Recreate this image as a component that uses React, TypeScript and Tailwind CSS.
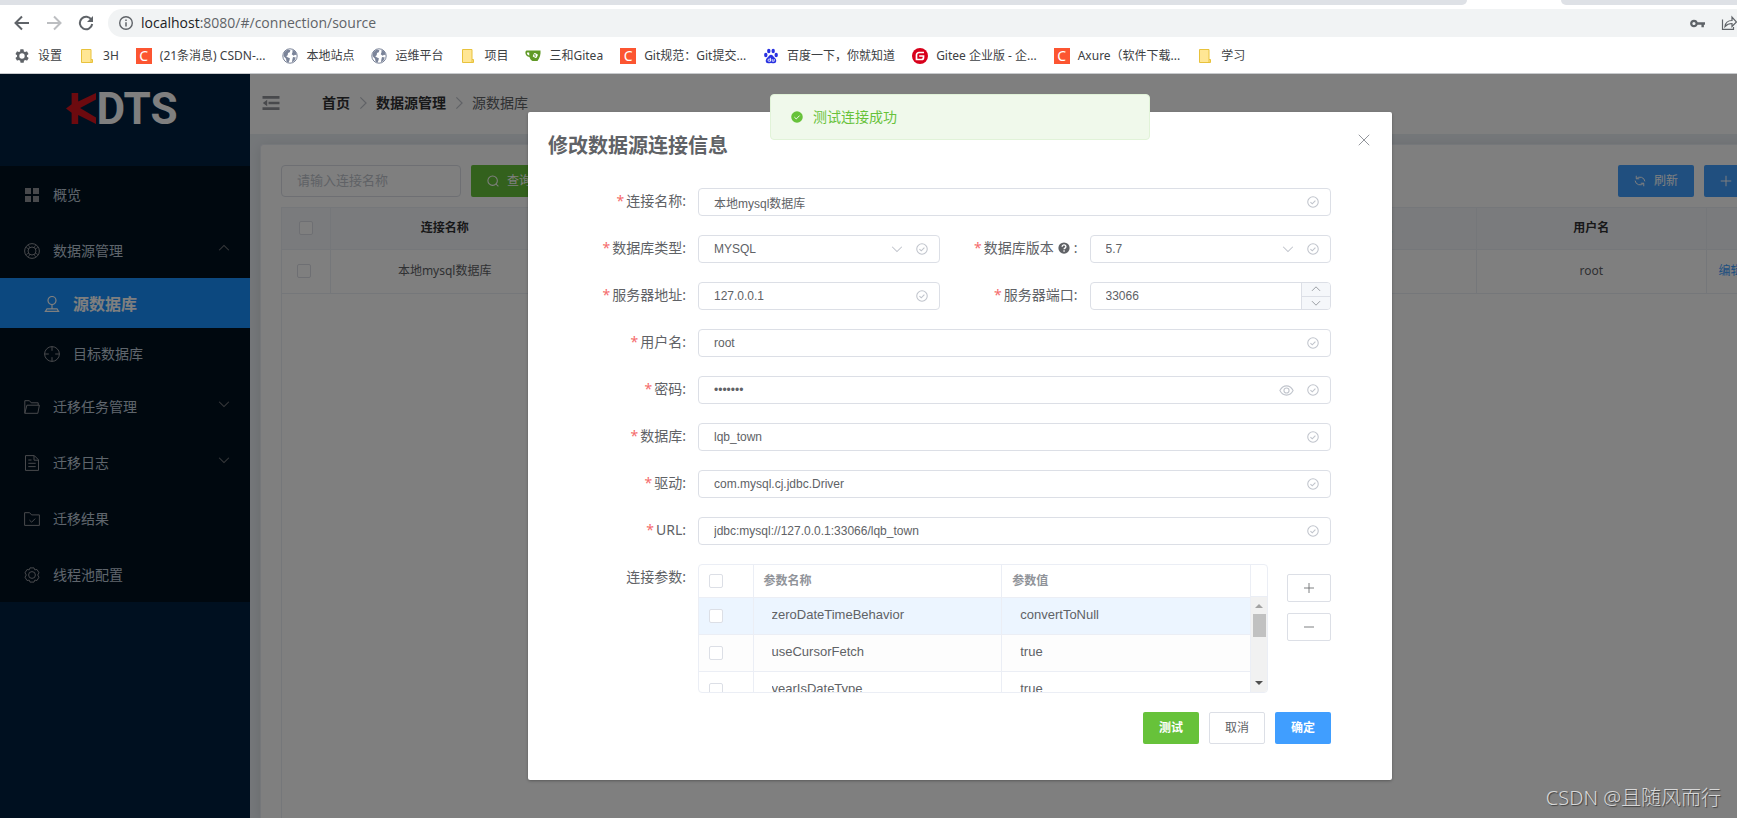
import { useState } from 'react';
import type { ReactNode } from 'react';
import clsx from 'clsx';

const UI_FONT = "font-['Noto_Sans','Noto_Sans_CJK_SC',sans-serif]";
const INPUT_FONT = "font-['Liberation_Sans','Noto_Sans_CJK_SC',sans-serif]";

interface IconProps {
  className?: string;
  children?: ReactNode;
}

// Thin 16px line icon, shared by the whole console
const LineIcon = ({ className = 'h-4 w-4', children }: IconProps) => (
  <svg viewBox="0 0 16 16" className={clsx('shrink-0', className)} fill="none" stroke="currentColor" aria-hidden="true">
    {children}
  </svg>
);

const GridIcon = () => (
  <LineIcon>
    <path d="M1 1h6v6H1zM9 1h6v6H9zM1 9h6v6H1zM9 9h6v6H9z" fill="currentColor" stroke="none" />
  </LineIcon>
);

const HelpIcon = () => (
  <LineIcon>
    <circle cx="8" cy="8" r="7.4" />
    <circle cx="8" cy="8" r="4" />
    <path d="M4.4 2.2 6 4.6M11.6 2.2 10 4.6M4.4 13.8 6 11.4M11.6 13.8 10 11.4M2.2 4.4l2.4 1.6M2.2 11.6l2.4-1.6M13.8 4.4l-2.4 1.6M13.8 11.6l-2.4-1.6" strokeWidth="0.8" />
  </LineIcon>
);

const CoordinateIcon = () => (
  <LineIcon>
    <circle cx="8" cy="4.5" r="4" strokeWidth="1.2" />
    <path d="M8 8.5V13M3 12.8h10l1.6 2.6H1.4z" strokeWidth="1.2" />
  </LineIcon>
);

const AimIcon = () => (
  <LineIcon>
    <circle cx="8" cy="8" r="7.4" />
    <path d="M8 .6v4.2M8 11.2v4.2M.6 8h4.2M11.2 8h4.2" />
  </LineIcon>
);

const FolderOpenIcon = () => (
  <LineIcon>
    <path d="M.8 14.3V1.7h4.6l1.8 2.1h7v2.4M.8 14.3 2.9 6.2h12.5l-1.6 8.1z" />
  </LineIcon>
);

const DocumentIcon = () => (
  <LineIcon>
    <path d="M1.5.6h8.800l4.200 4.200v10.600h-13zM10 .8v4.400h4.300M4.300 5h3.200M4.300 8.300h7.400M4.300 11.600h7.400" />
  </LineIcon>
);

const FolderCheckedIcon = () => (
  <LineIcon>
    <path d="M.6 14.400V1.700h5l2 2.200h7.800v10.500zM5.400 9l2.200 2.200 3.600-3.600" />
  </LineIcon>
);

const SettingIcon = () => (
  <LineIcon>
    <circle cx="8" cy="8" r="3.4" />
    <path d="M6 .9h4l.8 2 2.200-.4 2 3.300L13.700 8l1.300 2.200-2 3.300-2.200-.4-.8 2H6l-.8-2-2.200.4-2-3.300L2.300 8 1 5.800l2-3.300 2.200.4z" strokeLinejoin="round" />
  </LineIcon>
);

const Chevron = ({ up, className = 'h-3 w-3' }: { up?: boolean; className?: string }) => (
  <LineIcon className={className}>
    <path d={up ? 'M1.5 11 8 4.5l6.5 6.5' : 'M1.5 5 8 11.5 14.5 5'} strokeWidth="1.4" />
  </LineIcon>
);

const CircleCheck = () => (
  <LineIcon className="h-3 w-3 text-[#c0c4cc]">
    <circle cx="8" cy="8" r="7" strokeWidth="1.4" />
    <path d="M4.6 8.2 7 10.4l4.2-4.2" strokeWidth="1.5" />
  </LineIcon>
);

const EyeIcon = () => (
  <svg viewBox="0 0 16 12" className="h-[11px] w-[15px]" fill="none" stroke="currentColor" aria-hidden="true">
    <path d="M.8 6C2.6 2.6 5 1 8 1s5.400 1.600 7.200 5C13.400 9.400 11 11 8 11S2.600 9.400.8 6z" strokeWidth="1.200" />
    <circle cx="8" cy="6" r="2.800" strokeWidth="1.200" />
  </svg>
);

/* ---------- browser chrome ---------- */

const CsdnFavicon = () => (
  <span className="flex h-4 w-4 items-center justify-center bg-[#fc5531] text-sm leading-4 text-white">C</span>
);

const FolderFavicon = () => (
  <svg viewBox="0 0 16 16" className="h-4 w-4" aria-hidden="true">
    <path d="M2.500 1.500h9.500v10h1.500v3h-11z" fill="#ffe694" stroke="#e8c23c" />
    <path d="M12 11.500v3" stroke="#e8c23c" />
  </svg>
);

const GlobeFavicon = () => (
  <svg viewBox="0 0 16 16" className="h-4 w-4" aria-hidden="true">
    <circle cx="8" cy="8" r="7.200" fill="#fff" stroke="#7b8499" />
    <path d="M2 4.500 5.500 1.600l3 .6-.8 2-1.700.8-.3 2.200-1.500 1 1.800 1.300 1.900.8-.5 2.200-1 2.200-1.800-.9-.6-3L1.500 8z" fill="#7b8499" />
    <path d="M10.500 1.500 13.800 4l.9 3.300-1.700-.6-1.300 1.100-2-1.600.8-1.900zM11 9l2.800.4-1.200 3L10 14.400l.3-2.600z" fill="#7b8499" />
  </svg>
);

const GearFavicon = () => (
  <svg viewBox="0 0 24 24" className="h-4 w-4" fill="#5f6368" aria-hidden="true">
    <path d="M19.400 13a7.500 7.500 0 0 0 0-2l2.100-1.600c.2-.2.300-.4.100-.7l-2-3.400c-.1-.2-.4-.3-.6-.2l-2.500 1a7.300 7.300 0 0 0-1.700-1l-.4-2.600a.5.5 0 0 0-.5-.5h-4a.5.5 0 0 0-.5.4L9.200 5.100a7.300 7.300 0 0 0-1.700 1L5 5.100c-.2-.1-.5 0-.6.2l-2 3.400c-.1.300 0 .5.100.7L4.600 11a7.500 7.500 0 0 0 0 2l-2.100 1.600c-.2.200-.3.400-.1.700l2 3.400c.1.200.4.300.6.200l2.500-1c.5.400 1.100.8 1.700 1l.4 2.600c0 .3.200.5.500.5h4c.3 0 .5-.2.500-.4l.4-2.700c.6-.2 1.200-.6 1.700-1l2.500 1c.2.100.5 0 .6-.2l2-3.400c.1-.3 0-.5-.1-.7zM12 16a4 4 0 1 1 0-8 4 4 0 0 1 0 8z" />
  </svg>
);

const GiteaFavicon = () => (
  <svg viewBox="0 0 16 16" className="h-4 w-4" aria-hidden="true">
    <path d="M4.500 2.500h11c.4 3.500-.6 7.500-3 10.500h-5C5.700 12 4.800 10.500 4.500 9 2 9 .3 6.500.4 4.300c.1-1.200.8-1.800 1.800-1.800z" fill="#609926" />
    <path d="M4.200 4.500H2.400c-.9 0-.7 2.500 1.900 2.900z" fill="#fff" />
    <rect x="8" y="5.300" width="4.200" height="4.200" rx=".8" fill="#fff" transform="rotate(25 10 8)" />
    <path d="m9.800 6 .4 2.800" stroke="#609926" />
  </svg>
);

const BaiduFavicon = () => (
  <svg viewBox="0 0 16 16" className="h-4 w-4" fill="#2932e1" aria-hidden="true">
    <ellipse cx="2.800" cy="7" rx="1.700" ry="2.200" />
    <ellipse cx="5.800" cy="3" rx="1.700" ry="2.300" />
    <ellipse cx="10.200" cy="3" rx="1.700" ry="2.300" />
    <ellipse cx="13.200" cy="7" rx="1.700" ry="2.200" />
    <path d="M8 6.800c1.600 0 2.300 1.800 3.700 3 2.400 2 1.900 5.400-.7 5.500-1 0-2-.3-3-.3s-2 .3-3 .3c-2.600-.1-3.100-3.500-.7-5.500 1.400-1.200 2.100-3 3.700-3z" />
    <circle cx="6.200" cy="12.200" r="1.200" fill="none" stroke="#fff" strokeWidth=".8" />
    <path d="M7.500 9.800v3.700M9.200 11v2.200h2V11" fill="none" stroke="#fff" strokeWidth=".8" />
  </svg>
);

const GiteeFavicon = () => (
  <svg viewBox="0 0 16 16" className="h-4 w-4" aria-hidden="true">
    <circle cx="8" cy="8" r="8" fill="#d8001b" />
    <path d="M12 4.500H7A2.500 2.500 0 0 0 4.500 7v4.500h5A2 2 0 0 0 11.500 9.500V8H7.200" fill="none" stroke="#fff" strokeWidth="1.700" />
  </svg>
);

const bookmarks = [
  { label: '设置', icon: <GearFavicon /> },
  { label: '3H', icon: <FolderFavicon /> },
  { label: '(21条消息) CSDN-...', icon: <CsdnFavicon /> },
  { label: '本地站点', icon: <GlobeFavicon /> },
  { label: '运维平台', icon: <GlobeFavicon /> },
  { label: '项目', icon: <FolderFavicon /> },
  { label: '三和Gitea', icon: <GiteaFavicon /> },
  { label: 'Git规范：Git提交...', icon: <CsdnFavicon /> },
  { label: '百度一下，你就知道', icon: <BaiduFavicon /> },
  { label: 'Gitee 企业版 - 企...', icon: <GiteeFavicon /> },
  { label: 'Axure（软件下载...', icon: <CsdnFavicon /> },
  { label: '学习', icon: <FolderFavicon /> },
];

function BrowserBar() {
  return (
    <div className="shrink-0 border-b border-[#c8cacd] bg-white">
      <div className="flex h-[5px]">
        <div className="w-[1467px] rounded-br-lg bg-[#dee1e6]" />
        <div className="w-[94px]" />
        <div className="flex-1 rounded-bl-lg bg-[#dee1e6]" />
      </div>
      <div className="flex items-center pt-1 pl-3.5 pr-4">
        <div className="flex w-[94px] gap-4 text-[#5f6368]">
          <button aria-label="Back">
            <LineIcon>
              <path d="M15 8H2M8 1.500 1.500 8 8 14.500" strokeWidth="2" />
            </LineIcon>
          </button>
          <button aria-label="Forward" className="text-[#bcbec1]">
            <LineIcon>
              <path d="M1 8h13M8 1.500 14.500 8 8 14.500" strokeWidth="2" />
            </LineIcon>
          </button>
          <button aria-label="Reload">
            <LineIcon>
              <path d="M13.500 5A6.200 6.200 0 1 0 14.200 9" strokeWidth="2" />
              <path d="M15 1v6H9z" fill="currentColor" stroke="none" />
            </LineIcon>
          </button>
        </div>
        <div className="flex h-7 flex-1 items-center gap-2 rounded-full bg-[#f1f3f4] pl-[11px] text-[#5f6368]">
          <LineIcon className="h-[14px] w-[14px]">
            <circle cx="8" cy="8" r="7.200" strokeWidth="1.600" />
            <path d="M8 7v5M8 4v1.700" strokeWidth="1.700" />
          </LineIcon>
          <span className="flex-1 font-['Open_Sans'] text-sm leading-5">
            <span className="text-[#202124]">localhost</span>:8080/#/connection/source
          </span>
          <div className="flex w-[214px] items-center gap-4">
            <svg viewBox="0 0 16 16" className="h-[15px] w-[15px]" fill="none" stroke="currentColor" aria-hidden="true">
              <circle cx="4.200" cy="8" r="2.900" strokeWidth="2.400" />
              <path d="M7.500 8H16M13.500 8v4" strokeWidth="2.600" />
            </svg>
            <LineIcon>
              <path d="M1.500 4.500v9.800h11V12M4 11.500c.5-4 3-6 7-6v-3.500l4.500 5-4.500 4.500V8.500c-3 0-5 .8-7 3z" strokeWidth="1.200" />
            </LineIcon>
          </div>
        </div>
      </div>
      <nav className="flex h-9 items-center gap-[17px] pt-0.5 pl-3.5 text-xs whitespace-nowrap text-[#3c4043]">
        {bookmarks.map((mark) => (
          <a key={mark.label} href="#" className="flex items-center gap-2">
            {mark.icon}
            {mark.label}
          </a>
        ))}
      </nav>
    </div>
  );
}

/* ---------- console page ---------- */

interface MenuEntry {
  label: string;
  icon: ReactNode;
  arrow?: 'up' | 'down';
  child?: boolean;
  active?: boolean;
}

const menu: MenuEntry[] = [
  { label: '概览', icon: <GridIcon /> },
  { label: '数据源管理', icon: <HelpIcon />, arrow: 'up' },
  { label: '源数据库', icon: <CoordinateIcon />, child: true, active: true },
  { label: '目标数据库', icon: <AimIcon />, child: true },
  { label: '迁移任务管理', icon: <FolderOpenIcon />, arrow: 'down' },
  { label: '迁移日志', icon: <DocumentIcon />, arrow: 'down' },
  { label: '迁移结果', icon: <FolderCheckedIcon /> },
  { label: '线程池配置', icon: <SettingIcon /> },
];

function Sidebar() {
  return (
    <aside className="w-[250px] shrink-0 bg-[#002140]">
      <div className="flex h-[92px] items-start justify-center pt-3 pr-1.5">
        <svg viewBox="0 0 32 34" className="mt-1.5 h-8 w-[30px]" fill="#d9141e" preserveAspectRatio="none" aria-label="K">
          <path d="M6 1h7v9L32 1v7L15 17l17 10v7L13 24.500V34H6V22L0 17.500 6 13z" />
        </svg>
        <span className="font-[Roboto] text-[44px] leading-[46px] font-bold text-white">DTS</span>
      </div>
      <nav className="bg-[#00101f]">
        {menu.map((item) => (
          <a
            key={item.label}
            href="#"
            className={clsx(
              'flex items-center gap-[13px] pt-0.5 pr-5 text-sm',
              item.child ? 'h-[50px] pl-11' : 'h-14 pl-6',
              item.active ? 'bg-[#1890ff] text-white' : 'text-[#bfcbd9]'
            )}
          >
            <span className={item.active ? 'text-white' : 'text-[#909399]'}>{item.icon}</span>
            <span className={clsx('flex-1', item.active && 'text-base font-bold')}>{item.label}</span>
            {item.arrow && (
              <span className="pb-1.5 text-[#73767a]">
                <Chevron up={item.arrow === 'up'} />
              </span>
            )}
          </a>
        ))}
      </nav>
    </aside>
  );
}

const Checkbox = ({ label }: { label: string }) => (
  <input
    type="checkbox"
    aria-label={label}
    className="block h-3.5 w-3.5 appearance-none rounded-xs border border-[#dcdfe6] bg-white checked:bg-[#409eff]"
  />
);

const sourceColumns = ['连接名称', '数据库类型', '数据库版本', '服务器端口', '服务器地址', '用户名'];
const sourceRow = ['本地mysql数据库', 'MYSQL', '5.7', '33066', '127.0.0.1', 'root'];

function SourceTable() {
  return (
    <div className="flex-1 border border-b-0 border-[#ebeef5]">
      <table className="w-full table-fixed border-collapse text-center text-xs">
        <thead>
          <tr className="h-[41px] bg-[#f5f7fa] text-[#303133]">
            <th className="w-12 border-r border-b border-[#ebeef5] pl-[17px]">
              <Checkbox label="全选" />
            </th>
            {sourceColumns.map((name) => (
              <th key={name} className="border-r border-b border-[#ebeef5] font-bold">{name}</th>
            ))}
            <th className="w-[183px] border-b border-[#ebeef5] font-bold">操作</th>
          </tr>
        </thead>
        <tbody>
          <tr className="h-11 text-[#606266]">
            <td className="border-r border-b border-[#ebeef5] pl-[15px]">
              <Checkbox label="选择 本地mysql数据库" />
            </td>
            {sourceRow.map((value) => (
              <td key={value} className="border-r border-b border-[#ebeef5]">{value}</td>
            ))}
            <td className="border-b border-[#ebeef5] pl-3 text-left">
              <a href="#" className="text-[#409eff]">编辑</a>
            </td>
          </tr>
        </tbody>
      </table>
    </div>
  );
}

function SourcePage() {
  return (
    <main className="flex flex-1 flex-col bg-[#e9eef3]">
      <header className="flex h-[60px] shrink-0 items-center bg-white pl-3 pb-0.5">
        <button aria-label="折叠菜单" className="text-[#909399]">
          <svg viewBox="0 0 18 16" className="h-4 w-[18px]" fill="currentColor" aria-hidden="true">
            <path d="M.5 1h17v2.800H.5zM6.500 6.800h11v2.400h-11zM.5 12.200h17V15H.5zM.8 8l4.400-3.200v6.400z" />
          </svg>
        </button>
        <nav className="flex items-center gap-1.5 pl-[42px] text-sm text-[#606266]">
          <a href="#" className="font-bold text-[#303133]">首页</a>
          <span className="text-[#c0c4cc] -rotate-90"><Chevron className="h-3.5 w-3.5" /></span>
          <a href="#" className="font-bold text-[#303133]">数据源管理</a>
          <span className="text-[#c0c4cc] -rotate-90"><Chevron className="h-3.5 w-3.5" /></span>
          <span>源数据库</span>
        </nav>
      </header>
      <section className="m-2.5 mb-0 flex flex-1 flex-col gap-2.5 rounded-t border border-b-0 border-[#ebeef5] bg-white pt-5 pr-[19px] pl-5 shadow-[0_2px_12px_0_rgba(0,0,0,0.1)]">
        <div className="flex gap-2.5 text-xs">
          <input
            aria-label="连接名称"
            placeholder="请输入连接名称"
            className="h-8 w-[180px] rounded border border-[#dcdfe6] px-[15px] pb-0.5 text-[13px] placeholder:text-[#c0c4cc]"
          />
          <button className="flex h-8 items-center gap-2 rounded-xs bg-[#67c23a] px-4 text-white">
            <LineIcon className="h-3 w-3">
              <circle cx="7.500" cy="7.500" r="6.300" strokeWidth="1.400" />
              <path d="m12 12 3.200 3.200" strokeWidth="1.400" />
            </LineIcon>
            查询
          </button>
          <div className="ml-auto flex gap-2.5 text-white">
            <button className="flex h-8 w-[76px] items-center justify-center gap-2 rounded-xs bg-[#409eff]">
              <LineIcon className="h-3 w-3">
                <path d="M3 1v4h4M13 15v-4H9M3.200 5A6.500 6.500 0 0 1 14.500 8.500M12.800 11A6.500 6.500 0 0 1 1.500 7.500" strokeWidth="1.300" />
              </LineIcon>
              刷新
            </button>
            <button className="flex h-8 w-[76px] items-center justify-center gap-2 rounded-xs bg-[#409eff]">
              <LineIcon className="h-3 w-3"><path d="M8 1v14M1 8h14" strokeWidth="1.300" /></LineIcon>
              新增
            </button>
            <button className="h-8 w-[100px] rounded-xs bg-[#f56c6c]">批量删除</button>
          </div>
        </div>
        <SourceTable />
      </section>
    </main>
  );
}

/* ---------- edit dialog ---------- */

interface FieldProps {
  id?: string;
  label: ReactNode;
  required?: boolean;
  wide?: boolean;
  children: ReactNode;
}

const Field = ({ id, label, required = true, wide, children }: FieldProps) => (
  <div className={clsx('flex', wide && 'col-span-2')}>
    <label htmlFor={id} className="flex h-[26px] w-[150px] shrink-0 items-center justify-end gap-0.5 pr-3 text-sm text-[#606266]">
      {required && <span className="text-[#f56c6c]">*</span>}
      {label}
    </label>
    {children}
  </div>
);

const Box = ({ children }: { children: ReactNode }) => (
  <div className="flex h-7 min-w-0 flex-1 items-center gap-[13px] overflow-hidden rounded border border-[#dcdfe6] bg-white pr-[11px] text-[#c0c4cc]">
    {children}
  </div>
);

const textInput = clsx('h-full min-w-0 flex-1 appearance-none bg-transparent pl-[15px] text-xs text-[#606266] outline-none', INPUT_FONT);

const connectionParams = [
  { name: 'zeroDateTimeBehavior', value: 'convertToNull' },
  { name: 'useCursorFetch', value: 'true' },
  { name: 'yearIsDateType', value: 'true' },
];

function ParamTable() {
  const paramInput = clsx('block w-full bg-transparent pl-[18px] text-[13px] leading-5 outline-none', INPUT_FONT);
  return (
    <div className="flex h-[129px] min-w-0 flex-1 overflow-hidden rounded border border-[#ebeef5]">
      <div className="min-w-0 flex-1">
        <table className="w-full table-fixed border-collapse text-left text-xs text-[#606266]">
          <thead>
            <tr className="h-8 text-[#909399]">
              <th className="w-[54px] border-r border-b border-[#ebeef5] pl-2.5"><Checkbox label="全选参数" /></th>
              <th className="border-r border-b border-[#ebeef5] pl-2.5 font-bold">参数名称</th>
              <th className="border-r border-b border-[#ebeef5] pl-2.5 font-bold">参数值</th>
            </tr>
          </thead>
          <tbody>
            {connectionParams.map((param, index) => (
              <tr key={param.name} className={clsx('h-[37px]', index === 0 && 'bg-[#ecf5ff]', index === 1 && 'bg-[#fdfdfd]')}>
                <td className="border-r border-b border-[#ebeef5] pl-2.5"><Checkbox label={param.name} /></td>
                <td className="border-r border-b border-[#ebeef5] pb-0.5">
                  <input aria-label="参数名称" defaultValue={param.name} className={paramInput} />
                </td>
                <td className="border-r border-b border-[#ebeef5] pb-0.5">
                  <input aria-label="参数值" defaultValue={param.value} className={paramInput} />
                </td>
              </tr>
            ))}
          </tbody>
        </table>
      </div>
      <div className="flex w-4 flex-col">
        <div className="h-8 shrink-0 border-b border-[#ebeef5]" />
        <div className="flex flex-1 flex-col items-center bg-[#f1f1f1] py-[7px]">
          <svg viewBox="0 0 8 4" className="h-1 w-2" fill="#a3a3a3" aria-hidden="true"><path d="M0 4 4 0l4 4z" /></svg>
          <div className="mt-1.5 h-[23px] w-[13px] bg-[#c1c1c1]" />
          <svg viewBox="0 0 8 4" className="mt-auto h-1 w-2" fill="#505050" aria-hidden="true"><path d="M0 0h8L4 4z" /></svg>
        </div>
      </div>
    </div>
  );
}

function EditDialog() {
  const [form, setForm] = useState({
    name: '本地mysql数据库',
    host: '127.0.0.1',
    port: '33066',
    user: 'root',
    password: 'abc1234',
    database: 'lqb_town',
    driver: 'com.mysql.cj.jdbc.Driver',
    url: 'jdbc:mysql://127.0.0.1:33066/lqb_town',
  });

  const bind = (key: keyof typeof form) => ({
    id: key,
    value: form[key],
    onChange: (e: { target: { value: string } }) => setForm({ ...form, [key]: e.target.value }),
    className: textInput,
  });

  return (
    <div role="dialog" aria-label="修改数据源连接信息" className="mt-[38px] w-[45%] rounded-xs bg-white pb-9 shadow-[0_1px_3px_rgba(0,0,0,0.3)]">
      <div className="flex items-start justify-between px-5 pt-5">
        <h2 className="text-xl leading-7 font-bold text-[#606266]">修改数据源连接信息</h2>
        <button aria-label="关闭" className="pt-0.5 text-[#909399]">
          <LineIcon className="h-3 w-4"><path d="M1 1l14 14M15 1 1 15" strokeWidth="1.300" /></LineIcon>
        </button>
      </div>

      <form className="mr-[61px] ml-5 grid grid-cols-2 gap-y-[19px] pt-7">
        <Field id="name" label="连接名称:" wide>
          <Box><input {...bind('name')} /><CircleCheck /></Box>
        </Field>
        <Field id="dbType" label="数据库类型:">
          <Box>
            <select id="dbType" className={textInput}><option>MYSQL</option></select>
            <Chevron />
            <CircleCheck />
          </Box>
        </Field>
        <Field
          id="dbVersion"
          label={
            <>
              数据库版本
              <svg viewBox="0 0 16 16" className="mx-0.5 h-3 w-3" aria-hidden="true">
                <circle cx="8" cy="8" r="7.500" fill="#606266" />
                <path d="M5.500 6.400c0-3.300 5-3.300 5 0 0 1.700-2.400 1.800-2.400 3.400M8.100 11v1.900" stroke="#fff" strokeWidth="1.800" fill="none" />
              </svg>
              <span>:</span>
            </>
          }
        >
          <Box>
            <select id="dbVersion" className={textInput}><option>5.7</option></select>
            <Chevron />
            <CircleCheck />
          </Box>
        </Field>
        <Field id="host" label="服务器地址:">
          <Box><input {...bind('host')} /><CircleCheck /></Box>
        </Field>
        <Field id="port" label="服务器端口:">
          <div className="flex h-7 min-w-0 flex-1 overflow-hidden rounded border border-[#dcdfe6]">
            <input {...bind('port')} />
            <div className="flex w-[29px] flex-col border-l border-[#dcdfe6] bg-[#f5f7fa] text-[#909399]">
              <button type="button" aria-label="增加" className="flex flex-1 items-center justify-center border-b border-[#dcdfe6]">
                <Chevron up className="h-2.5 w-2.5" />
              </button>
              <button type="button" aria-label="减少" className="flex flex-1 items-center justify-center">
                <Chevron className="h-2.5 w-2.5" />
              </button>
            </div>
          </div>
        </Field>
        <Field id="user" label="用户名:" wide>
          <Box><input {...bind('user')} /><CircleCheck /></Box>
        </Field>
        <Field id="password" label="密码:" wide>
          <Box>
            <input type="password" {...bind('password')} />
            <EyeIcon />
            <CircleCheck />
          </Box>
        </Field>
        <Field id="database" label="数据库:" wide>
          <Box><input {...bind('database')} /><CircleCheck /></Box>
        </Field>
        <Field id="driver" label="驱动:" wide>
          <Box><input {...bind('driver')} /><CircleCheck /></Box>
        </Field>
        <Field id="url" label="URL:" wide>
          <Box><input {...bind('url')} /><CircleCheck /></Box>
        </Field>
        <Field label="连接参数:" required={false} wide>
          <ParamTable />
          <div className="flex flex-col gap-[11px] pt-2.5 pl-[19px] text-[#606266]">
            <button type="button" aria-label="添加参数" className="flex h-7 w-11 items-center justify-center rounded-xs border border-[#dcdfe6]">
              <LineIcon className="h-2.5 w-2.5"><path d="M8 0v16M0 8h16" strokeWidth="1.300" /></LineIcon>
            </button>
            <button type="button" aria-label="删除参数" className="flex h-7 w-11 items-center justify-center rounded-xs border border-[#dcdfe6]">
              <LineIcon className="h-2.5 w-2.5"><path d="M0 8h16" strokeWidth="1.300" /></LineIcon>
            </button>
          </div>
        </Field>
        <div className="col-span-2 flex justify-end gap-2.5 text-xs">
          <button type="button" className="h-8 w-14 rounded-xs bg-[#67c23a] font-bold text-white">测试</button>
          <button type="button" className="h-8 w-14 rounded-xs border border-[#dcdfe6] text-[#606266]">取消</button>
          <button type="button" className="h-8 w-14 rounded-xs bg-[#409eff] font-bold text-white">确定</button>
        </div>
      </form>
    </div>
  );
}

const Toast = () => (
  <div role="alert" className="absolute top-5 left-1/2 flex h-[46px] w-[380px] -translate-x-1/2 items-center gap-2.5 rounded border border-[#e1f3d8] bg-[#f0f9eb] px-5 text-sm text-[#67c23a]">
    <svg viewBox="0 0 16 16" className="h-3 w-3" aria-hidden="true">
      <circle cx="8" cy="8" r="7.700" fill="#67c23a" />
      <path d="M4.500 8.200 7 10.600l4.500-4.500" fill="none" stroke="#fff" strokeWidth="1.200" />
    </svg>
    测试连接成功
  </div>
);

export default function App() {
  return (
    <div className={clsx('relative h-screen overflow-hidden', UI_FONT)}>
      <div className="flex h-full min-w-[1920px] flex-col">
        <BrowserBar />
        <div className="relative flex min-h-0 flex-1 overflow-hidden">
          <Sidebar />
          <SourcePage />
          <div className="absolute inset-0 flex items-start justify-center bg-black/50">
            <EditDialog />
          </div>
          <Toast />
        </div>
      </div>
      <span className="absolute right-4 bottom-1 text-xl leading-8 font-light text-[#d8d8d8] [text-shadow:1px_1px_1px_#404040]">
        CSDN @且随风而行
      </span>
    </div>
  );
}
